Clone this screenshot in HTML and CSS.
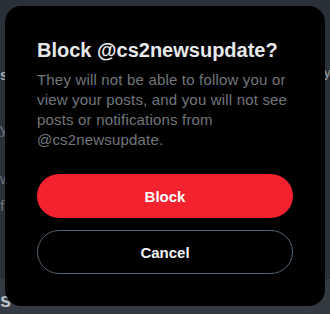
FILE: index.html
```html
<!DOCTYPE html>
<html lang="en">
<head>
<meta charset="utf-8">
<title>Block</title>
<link rel="stylesheet" href="styles.css">
</head>
<body>
<div class="backdrop">
  <div class="bg-page">
    <span class="ghost g-s1">s</span>
    <span class="ghost g-y">y</span>
    <span class="ghost g-w">w</span>
    <span class="ghost g-f">f</span>
    <span class="ghost g-s2">s</span>
    <span class="ghost g-yr">y</span>
    <div class="bg-lower"></div>
  </div>
  <div class="modal" role="dialog">
    <h1 class="title">Block @cs2newsupdate?</h1>
    <p class="desc">They will not be able to follow you or view your posts, and you will not see posts or notifications from @cs2newsupdate.</p>
    <div class="actions">
      <button class="btn btn-block">Block</button>
      <button class="btn btn-cancel">Cancel</button>
    </div>
  </div>
</div>
</body>
</html>
```

FILE: styles.css
```css
* { box-sizing: border-box; }
html, body {
  margin: 0;
  padding: 0;
  width: 330px;
  height: 314px;
  overflow: hidden;
  font-family: "Liberation Sans", Arial, sans-serif;
}
.backdrop {
  position: relative;
  width: 330px;
  height: 314px;
  background: #2a3037;
  display: flex;
  align-items: flex-start;
  justify-content: center;
  padding-top: 6px;
}
.bg-page {
  position: absolute;
  inset: 0;
}
.bg-lower {
  position: absolute;
  left: 0;
  right: 0;
  top: 279px;
  bottom: 0;
  background: #343a41;
}
.ghost {
  position: absolute;
  font-size: 15px;
  line-height: 20px;
  color: #6c7278;
  z-index: 1;
}
.g-s1 { left: 0; top: 65px; font-weight: 700; color: #a4a9ae; }
.g-y { left: 0; top: 119px; }
.g-w { left: 0; top: 169px; }
.g-f { left: 0; top: 196px; }
.g-s2 { left: 0; top: 288px; font-size: 20px; line-height: 24px; font-weight: 700; color: #b9bec3; }
.g-yr { left: 324px; top: 63px; font-size: 13px; color: #9aa0a6; }
.modal {
  position: relative;
  z-index: 2;
  width: 320px;
  background: #000;
  border-radius: 16px;
  padding: 32px;
}
.title {
  margin: 0;
  font-size: 20px;
  line-height: 24px;
  font-weight: 700;
  color: #e7e9ea;
}
.desc {
  margin: 8px 0 0;
  font-size: 15px;
  line-height: 20px;
  letter-spacing: 0.18px;
  color: #71767b;
}
.actions {
  margin-top: 24px;
  display: flex;
  flex-direction: column;
  gap: 12px;
}
.btn {
  height: 44px;
  border-radius: 22px;
  font-family: "Liberation Sans", Arial, sans-serif;
  font-size: 15px;
  font-weight: 700;
  cursor: pointer;
}
.btn-block {
  background: #f4212e;
  border: none;
  color: #fff;
}
.btn-cancel {
  background: transparent;
  border: 1px solid #536471;
  color: #eff3f4;
}
```
